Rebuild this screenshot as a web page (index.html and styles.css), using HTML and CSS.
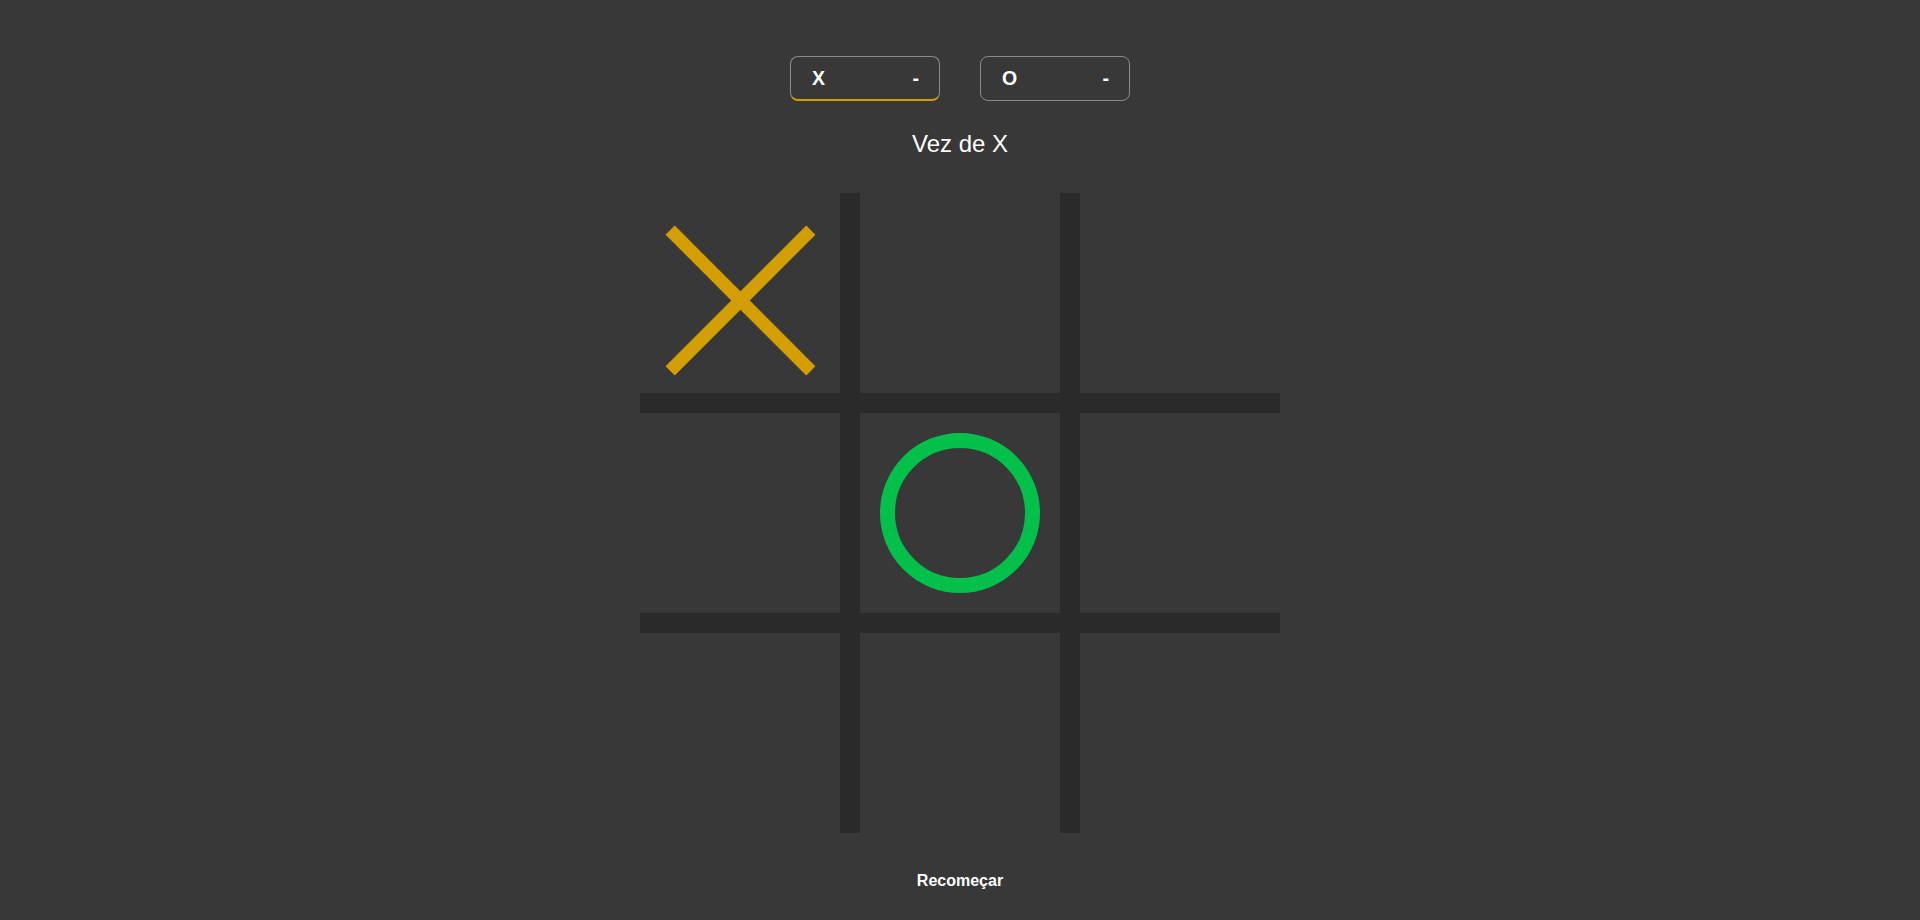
FILE: index.html
```html
<!DOCTYPE html>
<html lang="pt-BR">
<head>
<meta charset="utf-8">
<title>Jogo da Velha</title>
<link rel="stylesheet" href="styles.css">
</head>
<body>
<main class="game">
  <div class="scores">
    <div class="score score-active"><span class="score-player">X</span><span class="score-value">-</span></div>
    <div class="score"><span class="score-player">O</span><span class="score-value">-</span></div>
  </div>
  <p class="status">Vez de X</p>
  <div class="board">
    <div class="cell"><span class="mark-x"></span></div>
    <div class="cell"></div>
    <div class="cell"></div>
    <div class="cell"></div>
    <div class="cell"><span class="mark-o"></span></div>
    <div class="cell"></div>
    <div class="cell"></div>
    <div class="cell"></div>
    <div class="cell"></div>
  </div>
  <button class="restart">Recomeçar</button>
</main>
</body>
</html>
```
FILE: styles.css
```css
html, body {
  margin: 0;
  padding: 0;
  background: #383838;
  color: #ffffff;
  font-family: "Liberation Sans", Arial, sans-serif;
}

.game {
  display: flex;
  flex-direction: column;
  align-items: center;
  padding-top: 56px;
}

.scores {
  display: flex;
  gap: 40px;
}

.score {
  box-sizing: border-box;
  width: 150px;
  height: 45px;
  border: 1px solid #8a8a8a;
  border-radius: 8px;
  display: flex;
  align-items: center;
  justify-content: space-between;
  padding: 0 20px 0 21px;
  font-size: 19.5px;
  font-weight: bold;
}

.score-active {
  border-bottom: 2px solid #d39e00;
}

.status {
  margin: 29px 0 0;
  font-size: 24px;
  line-height: normal;
}

.board {
  margin-top: 35px;
  width: 640px;
  height: 640px;
  display: grid;
  grid-template-columns: repeat(3, 200px);
  grid-template-rows: repeat(3, 200px);
  gap: 20px;
  background: #2a2a2a;
}

.cell {
  background: #383838;
  position: relative;
  display: flex;
  align-items: center;
  justify-content: center;
}

.mark-x {
  position: relative;
  width: 150px;
  height: 150px;
  top: 7px;
}

.mark-x::before,
.mark-x::after {
  content: "";
  position: absolute;
  left: 50%;
  top: 50%;
  width: 199px;
  height: 13px;
  margin-left: -99.5px;
  margin-top: -6.5px;
  background: #d39e00;
}

.mark-x::before {
  transform: rotate(45deg);
}

.mark-x::after {
  transform: rotate(-45deg);
}

.mark-o {
  box-sizing: border-box;
  width: 160px;
  height: 160px;
  border: 15px solid #02c04a;
  border-radius: 50%;
}

.restart {
  margin-top: 39px;
  background: none;
  border: none;
  padding: 0;
  color: #ffffff;
  font-family: "Liberation Sans", Arial, sans-serif;
  font-size: 16px;
  font-weight: bold;
  line-height: normal;
  cursor: pointer;
}
```
